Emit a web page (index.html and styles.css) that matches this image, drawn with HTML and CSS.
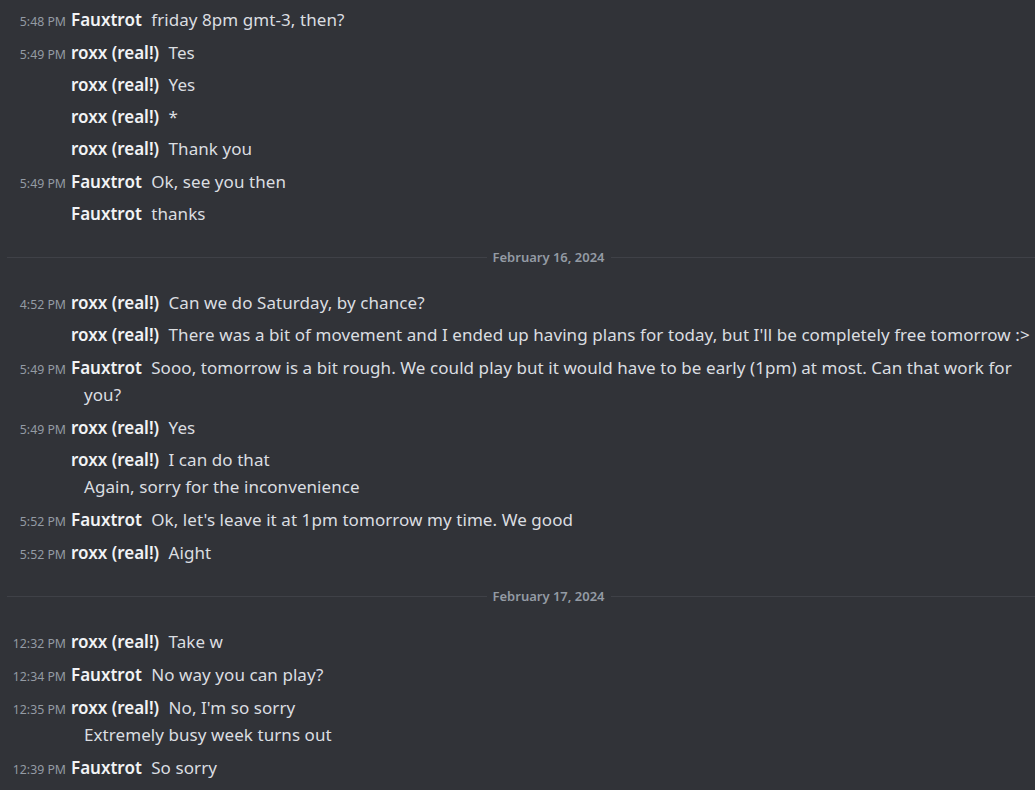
FILE: index.html
```html
<!DOCTYPE html>
<html>
<head>
<meta charset="utf-8">
<link rel="stylesheet" href="styles.css">
</head>
<body>
<div class="chat">
  <div class="msg first"><span class="ts">5:48 PM</span><span class="name">Fauxtrot</span><span class="text">friday 8pm gmt-3, then?</span></div>

  <div class="msg group"><span class="ts">5:49 PM</span><span class="name">roxx (real!)</span><span class="text">Tes</span></div>
  <div class="msg"><span class="ts"></span><span class="name">roxx (real!)</span><span class="text">Yes</span></div>
  <div class="msg"><span class="ts"></span><span class="name">roxx (real!)</span><span class="text">*</span></div>
  <div class="msg"><span class="ts"></span><span class="name">roxx (real!)</span><span class="text">Thank you</span></div>

  <div class="msg group"><span class="ts">5:49 PM</span><span class="name">Fauxtrot</span><span class="text">Ok, see you then</span></div>
  <div class="msg"><span class="ts"></span><span class="name">Fauxtrot</span><span class="text">thanks</span></div>

  <div class="divider"><span class="date">February 16, 2024</span></div>

  <div class="msg group"><span class="ts">4:52 PM</span><span class="name">roxx (real!)</span><span class="text">Can we do Saturday, by chance?</span></div>
  <div class="msg"><span class="ts"></span><span class="name">roxx (real!)</span><span class="text">There was a bit of movement and I ended up having plans for today, but I'll be completely free tomorrow :&gt;</span></div>

  <div class="msg group"><span class="ts">5:49 PM</span><span class="name">Fauxtrot</span><span class="text">Sooo, tomorrow is a bit rough. We could play but it would have to be early (1pm) at most. Can that work for you?</span></div>

  <div class="msg group"><span class="ts">5:49 PM</span><span class="name">roxx (real!)</span><span class="text">Yes</span></div>
  <div class="msg"><span class="ts"></span><span class="name">roxx (real!)</span><span class="text">I can do that<br>Again, sorry for the inconvenience</span></div>

  <div class="msg group"><span class="ts">5:52 PM</span><span class="name">Fauxtrot</span><span class="text">Ok, let's leave it at 1pm tomorrow my time. We good</span></div>

  <div class="msg group"><span class="ts">5:52 PM</span><span class="name">roxx (real!)</span><span class="text">Aight</span></div>

  <div class="divider"><span class="date">February 17, 2024</span></div>

  <div class="msg group"><span class="ts">12:32 PM</span><span class="name">roxx (real!)</span><span class="text">Take w</span></div>

  <div class="msg group"><span class="ts">12:34 PM</span><span class="name">Fauxtrot</span><span class="text">No way you can play?</span></div>

  <div class="msg group"><span class="ts">12:35 PM</span><span class="name">roxx (real!)</span><span class="text">No, I'm so sorry<br>Extremely busy week turns out</span></div>

  <div class="msg group"><span class="ts">12:39 PM</span><span class="name">Fauxtrot</span><span class="text">So sorry</span></div>
</div>
</body>
</html>
```

FILE: styles.css
```css
html, body {
  margin: 0;
  padding: 0;
  background: #313338;
  height: 100%;
  overflow: hidden;
}
.chat {
  font-family: "Noto Sans", "Open Sans", sans-serif;
  font-size: 17px;
  color: #dbdee1;
  padding-top: 3px;
}
.msg {
  line-height: 27px;
  padding: 2.5px 0 2.5px 84px;
  text-indent: -84px;
}
.group {
  margin-top: 1px;
}
.ts {
  display: inline-block;
  width: 66px;
  margin-right: 5px;
  text-align: right;
  text-indent: 0;
  font-size: 12.3px;
  line-height: 1;
  color: #949ba4;
  vertical-align: baseline;
}
.name {
  font-weight: 600;
  color: #f2f3f5;
  margin-right: 5px;
}
.name::after {
  content: " ";
}
.text {
  letter-spacing: 0.07px;
}
.divider {
  display: flex;
  align-items: center;
  margin-left: 7px;
  height: 56px;
}
.divider::before,
.divider::after {
  content: "";
  height: 1px;
  background: #3f4147;
}
.divider::before {
  flex: 479 1 0;
}
.divider::after {
  flex: 424 1 0;
}
.date {
  font-size: 13px;
  font-weight: 600;
  color: #949ba4;
  padding: 0 6px;
  line-height: 16px;
}
```
